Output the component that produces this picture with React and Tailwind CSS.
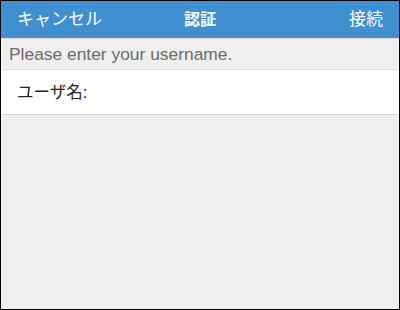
export default function App() {
  return (
    <div
      className="w-[400px] h-[310px] border border-black bg-[#efefef] flex flex-col"
      style={{ fontFamily: '"Liberation Sans", "Noto Sans CJK JP", sans-serif' }}
    >
      {/* HEADER */}
      <div className="h-[37px] bg-[#3f8fd1] flex items-center justify-between px-4 text-white text-[17px] relative">
        <span>キャンセル</span>
        <span className="absolute left-1/2 -translate-x-1/2 font-bold text-[16px]">認証</span>
        <span>接続</span>
      </div>

      <div className="h-px bg-[#dcdcdc]" />

      {/* PROMPT */}
      <div className="h-[31px] flex items-center px-2 text-[17.4px] text-[#6b6b6b] border-b border-[#dedede]">
        Please enter your username.
      </div>

      {/* USERNAME ROW */}
      <div className="h-[45px] bg-white flex items-center px-4 text-[16.5px] text-[#222] border-b border-[#d8d8d8]">
        ユーザ名:
      </div>
    </div>
  );
}
